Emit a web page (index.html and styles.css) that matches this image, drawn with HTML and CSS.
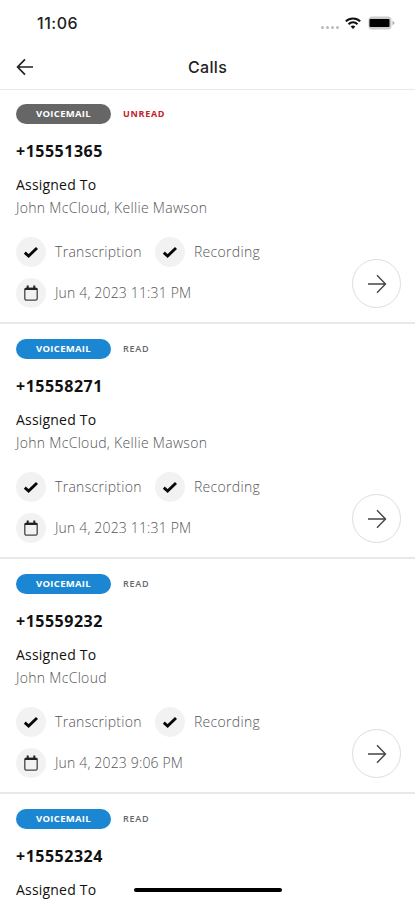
FILE: index.html
```html
<!DOCTYPE html>
<html lang="en">
<head>
<meta charset="utf-8">
<meta name="viewport" content="width=device-width, initial-scale=1">
<title>Calls</title>
<link rel="stylesheet" href="styles.css">
</head>
<body>
<svg class="defs" aria-hidden="true">
  <symbol id="check" viewBox="0 0 16 16"><path d="M1.8 8.7 5.6 12 14 4" fill="none" stroke="#080808" stroke-width="2.9"/></symbol>
  <symbol id="calendar" viewBox="0 0 16 16"><rect x="1.8" y="3.2" width="12.4" height="12" rx="1.6" fill="none" stroke="#444" stroke-width="1.3"/><path d="M1.8 4h12.4M4.7 .6v3M11.3 .6v3" fill="none" stroke="#222" stroke-width="2"/></symbol>
  <symbol id="arrow" viewBox="0 0 20 20"><path d="M1 10h17M10 1.3 18.5 10 10 18.7" fill="none" stroke="#444" stroke-width="1.4"/></symbol>
</svg>
<div class="screen">
  <header class="top">
    <div class="status">
      <span class="time">11:06</span>
      <div class="indicators">
        <span class="dots"><i></i><i></i><i></i><i></i></span>
        <svg class="wifi" viewBox="0 0 16 12"><g fill="none" stroke="#111" stroke-width="2"><path d="M.8 4.4a10.2 10.2 0 0 1 14.4 0"/><path d="M3.5 7.2a6.4 6.4 0 0 1 9 0"/></g><path d="M8 12 5.7 9.5a3.3 3.3 0 0 1 4.6 0z" fill="#111"/></svg>
        <svg class="battery" viewBox="0 0 27 14"><rect x=".5" y=".5" width="23" height="13" rx="3.5" fill="#ccc"/><path d="M24.5 4.5 26.7 7l-2.2 2.5z" fill="#aaa"/><rect x="1.5" y="3" width="20" height="8" rx="1" fill="#000"/></svg>
      </div>
    </div>
    <div class="nav">
      <svg class="back" viewBox="0 0 18 18"><path d="M17 9H1.8M9 1.4 1.6 9 9 16.6" fill="none" stroke="#222" stroke-width="1.7"/></svg>
      <h1>Calls</h1>
    </div>
  </header>
  <main>
    <article class="call">
      <div class="tags"><span class="pill unread">VOICEMAIL</span><span class="state new">UNREAD</span></div>
      <h2>+15551365</h2>
      <h3>Assigned To</h3>
      <p class="names">John McCloud, Kellie Mawson</p>
      <div class="details">
        <div class="facts">
          <div class="row"><span class="dot"><svg><use href="#check"/></svg></span><span class="transcription">Transcription</span><span class="dot"><svg><use href="#check"/></svg></span><span class="recording">Recording</span></div>
          <div class="row"><span class="dot"><svg><use href="#calendar"/></svg></span><span class="date">Jun 4, 2023 11:31 PM</span></div>
        </div>
        <span class="open"><svg><use href="#arrow"/></svg></span>
      </div>
    </article>
    <article class="call">
      <div class="tags"><span class="pill">VOICEMAIL</span><span class="state">READ</span></div>
      <h2>+15558271</h2>
      <h3>Assigned To</h3>
      <p class="names">John McCloud, Kellie Mawson</p>
      <div class="details">
        <div class="facts">
          <div class="row"><span class="dot"><svg><use href="#check"/></svg></span><span class="transcription">Transcription</span><span class="dot"><svg><use href="#check"/></svg></span><span class="recording">Recording</span></div>
          <div class="row"><span class="dot"><svg><use href="#calendar"/></svg></span><span class="date">Jun 4, 2023 11:31 PM</span></div>
        </div>
        <span class="open"><svg><use href="#arrow"/></svg></span>
      </div>
    </article>
    <article class="call">
      <div class="tags"><span class="pill">VOICEMAIL</span><span class="state">READ</span></div>
      <h2>+15559232</h2>
      <h3>Assigned To</h3>
      <p class="names">John McCloud</p>
      <div class="details">
        <div class="facts">
          <div class="row"><span class="dot"><svg><use href="#check"/></svg></span><span class="transcription">Transcription</span><span class="dot"><svg><use href="#check"/></svg></span><span class="recording">Recording</span></div>
          <div class="row"><span class="dot"><svg><use href="#calendar"/></svg></span><span class="date">Jun 4, 2023 9:06 PM</span></div>
        </div>
        <span class="open"><svg><use href="#arrow"/></svg></span>
      </div>
    </article>
    <article class="call">
      <div class="tags"><span class="pill">VOICEMAIL</span><span class="state">READ</span></div>
      <h2>+15552324</h2>
      <h3>Assigned To</h3>
    </article>
  </main>
  <div class="home"></div>
</div>
</body>
</html>
```
FILE: styles.css
```css
* { box-sizing: border-box; }
body { margin: 0; background: #fff; font-family: "Open Sans", sans-serif; color: #111; }
h1, h2, h3, p { margin: 0; }
svg { display: block; }
.defs { position: absolute; width: 0; height: 0; }
.screen { position: relative; width: 415px; height: 900px; overflow: hidden; }
.top { height: 90px; border-bottom: 1px solid #e9e9e9; }
.status { height: 46px; padding: 0 20px 0 37px; display: flex; align-items: center; justify-content: space-between; }
.time { font: 500 16px/20px Inter, sans-serif; letter-spacing: .5px; color: #222; }
.indicators { display: flex; align-items: center; }
.dots { display: flex; gap: 2px; margin: 8px 6px 0 0; }
.dots i { width: 3px; height: 3px; border-radius: 50%; background: #bbb; }
.wifi { width: 16px; height: 12px; margin-right: 7px; }
.battery { width: 27px; height: 14px; }
.nav { height: 42px; display: grid; grid-template-columns: 32px 1fr 32px; align-items: center; }
.back { width: 18px; height: 18px; margin-left: 16px; }
h1 { text-align: center; font: 500 16px/24px Inter, sans-serif; letter-spacing: .35px; color: #222; }
main { margin-top: -1px; }
.call { height: 235px; padding: 15px 14px 0 16px; border-bottom: 2px solid #e8e8e8; }
.tags { display: flex; align-items: center; gap: 12px; height: 20px; }
.pill { width: 95px; height: 20px; border-radius: 10px; background: #1b87d2; color: #fff; font-size: 9.5px; font-weight: 700; line-height: 20px; letter-spacing: .3px; text-align: center; }
.pill.unread { background: #666; }
.state { font-size: 9px; font-weight: 600; color: #666; line-height: 20px; letter-spacing: .8px; }
.state.new { color: #c5202c; font-weight: 700; letter-spacing: .7px; }
h2 { margin-top: 15px; font-size: 16px; font-weight: 700; line-height: 24px; letter-spacing: .5px; }
h3 { margin-top: 11px; font-size: 14px; font-weight: 500; line-height: 22px; letter-spacing: .2px; }
.names { margin-top: 1px; font-size: 14px; font-weight: 300; line-height: 22px; letter-spacing: .3px; color: #555; }
.details { display: flex; justify-content: space-between; margin-top: 18px; }
.facts { display: grid; gap: 10px; }
.row { display: flex; align-items: center; height: 30px; font-size: 14px; font-weight: 300; line-height: 20px; letter-spacing: .3px; color: #555; white-space: nowrap; }
.dot { width: 30px; height: 30px; margin-right: 9px; border-radius: 50%; background: #f2f2f2; display: grid; place-items: center; }
.dot svg { width: 16px; height: 16px; }
.transcription { width: 100px; }
.date { letter-spacing: .16px; }
.open { width: 49px; height: 49px; margin-top: 22px; border: 1px solid #ddd; border-radius: 50%; display: grid; place-items: center; }
.open svg { width: 20px; height: 20px; }
.home { position: absolute; left: 134px; bottom: 8px; width: 148px; height: 4px; border-radius: 2px; background: #000; }
```
